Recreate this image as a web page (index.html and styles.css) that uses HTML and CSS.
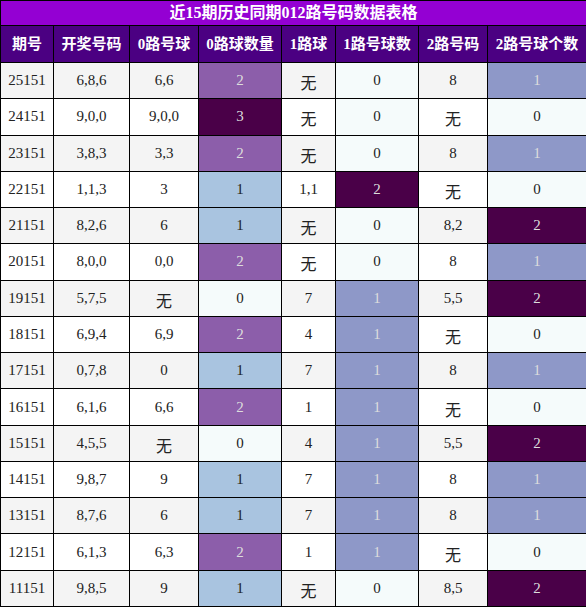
FILE: index.html
```html
<!DOCTYPE html>
<html lang="zh">
<head>
<meta charset="utf-8">
<title>近15期历史同期012路号码数据表格</title>
<link rel="stylesheet" href="styles.css">
</head>
<body>
<table class="grid">
  <colgroup>
    <col class="w1"><col class="w2"><col class="w3"><col class="w4"><col class="w5"><col class="w6"><col class="w7"><col class="w8">
  </colgroup>
  <thead>
    <tr class="title-row"><th colspan="8" class="title">近15期历史同期012路号码数据表格</th></tr>
    <tr class="head-row">
      <th>期号</th><th>开奖号码</th><th>0路号球</th><th>0路球数量</th><th>1路球</th><th>1路号球数</th><th>2路号码</th><th>2路号球个数</th>
    </tr>
  </thead>
  <tbody>
    <tr class="alt"><td>25151</td><td>6,8,6</td><td>6,6</td><td class="p2">2</td><td class="none">无</td><td class="z">0</td><td>8</td><td class="b1">1</td></tr>
    <tr><td>24151</td><td>9,0,0</td><td>9,0,0</td><td class="p3">3</td><td class="none">无</td><td class="z">0</td><td class="none">无</td><td class="z">0</td></tr>
    <tr class="alt"><td>23151</td><td>3,8,3</td><td>3,3</td><td class="p2">2</td><td class="none">无</td><td class="z">0</td><td>8</td><td class="b1">1</td></tr>
    <tr><td>22151</td><td>1,1,3</td><td>3</td><td class="c1">1</td><td>1,1</td><td class="p3">2</td><td class="none">无</td><td class="z">0</td></tr>
    <tr class="alt"><td>21151</td><td>8,2,6</td><td>6</td><td class="c1">1</td><td class="none">无</td><td class="z">0</td><td>8,2</td><td class="p3">2</td></tr>
    <tr><td>20151</td><td>8,0,0</td><td>0,0</td><td class="p2">2</td><td class="none">无</td><td class="z">0</td><td>8</td><td class="b1">1</td></tr>
    <tr class="alt"><td>19151</td><td>5,7,5</td><td class="none">无</td><td class="z">0</td><td>7</td><td class="b1">1</td><td>5,5</td><td class="p3">2</td></tr>
    <tr><td>18151</td><td>6,9,4</td><td>6,9</td><td class="p2">2</td><td>4</td><td class="b1">1</td><td class="none">无</td><td class="z">0</td></tr>
    <tr class="alt"><td>17151</td><td>0,7,8</td><td>0</td><td class="c1">1</td><td>7</td><td class="b1">1</td><td>8</td><td class="b1">1</td></tr>
    <tr><td>16151</td><td>6,1,6</td><td>6,6</td><td class="p2">2</td><td>1</td><td class="b1">1</td><td class="none">无</td><td class="z">0</td></tr>
    <tr class="alt"><td>15151</td><td>4,5,5</td><td class="none">无</td><td class="z">0</td><td>4</td><td class="b1">1</td><td>5,5</td><td class="p3">2</td></tr>
    <tr><td>14151</td><td>9,8,7</td><td>9</td><td class="c1">1</td><td>7</td><td class="b1">1</td><td>8</td><td class="b1">1</td></tr>
    <tr class="alt"><td>13151</td><td>8,7,6</td><td>6</td><td class="c1">1</td><td>7</td><td class="b1">1</td><td>8</td><td class="b1">1</td></tr>
    <tr><td>12151</td><td>6,1,3</td><td>6,3</td><td class="p2">2</td><td>1</td><td class="b1">1</td><td class="none">无</td><td class="z">0</td></tr>
    <tr class="alt"><td>11151</td><td>9,8,5</td><td>9</td><td class="c1">1</td><td class="none">无</td><td class="z">0</td><td>8,5</td><td class="p3">2</td></tr>
  </tbody>
</table>
</body>
</html>
```
FILE: styles.css
```css
html, body {
  margin: 0;
  padding: 0;
  background: #ffffff;
}

.grid {
  width: 586px;
  border-collapse: collapse;
  table-layout: fixed;
  font-family: "Liberation Serif", "Noto Sans CJK SC", serif;
  font-size: 15px;
  line-height: 17px;
  color: #222222;
}

.w1 { width: 53px; }
.w2 { width: 76px; }
.w3 { width: 69px; }
.w4 { width: 83px; }
.w5 { width: 54px; }
.w6 { width: 83px; }
.w7 { width: 69px; }
.w8 { width: 99px; }

.grid th,
.grid td {
  border: 1px solid #000000;
  padding: 0;
  text-align: center;
  vertical-align: middle;
}

.title-row {
  height: 25px;
}

.title {
  background: #9400d3;
  color: #ffffff;
  font-size: 16px;
  font-weight: bold;
  line-height: 20px;
}

.head-row {
  height: 37px;
}

.head-row th {
  background: #4b0082;
  color: #ffffff;
  font-size: 15px;
  font-weight: bold;
  line-height: 20px;
}

.grid tbody tr {
  height: 36.27px;
}

.grid tbody td {
  background: #ffffff;
}

.grid tbody tr.alt td {
  background: #f4f4f4;
}

.grid tbody td.none {
  font-family: "Noto Sans CJK SC", sans-serif;
  font-size: 16px;
  line-height: 16px;
  padding-top: 3px;
}

.grid tbody td.z,
.grid tbody tr.alt td.z {
  background: #f5fbfb;
}

.grid tbody td.p2,
.grid tbody tr.alt td.p2 {
  background: #8c5eaa;
  color: #dddddd;
}

.grid tbody td.p3,
.grid tbody tr.alt td.p3 {
  background: #4a0048;
  color: #dddddd;
}

.grid tbody td.c1,
.grid tbody tr.alt td.c1 {
  background: #a9c4e0;
  color: #222222;
}

.grid tbody td.b1,
.grid tbody tr.alt td.b1 {
  background: #8e98c8;
  color: #dddddd;
}
```
